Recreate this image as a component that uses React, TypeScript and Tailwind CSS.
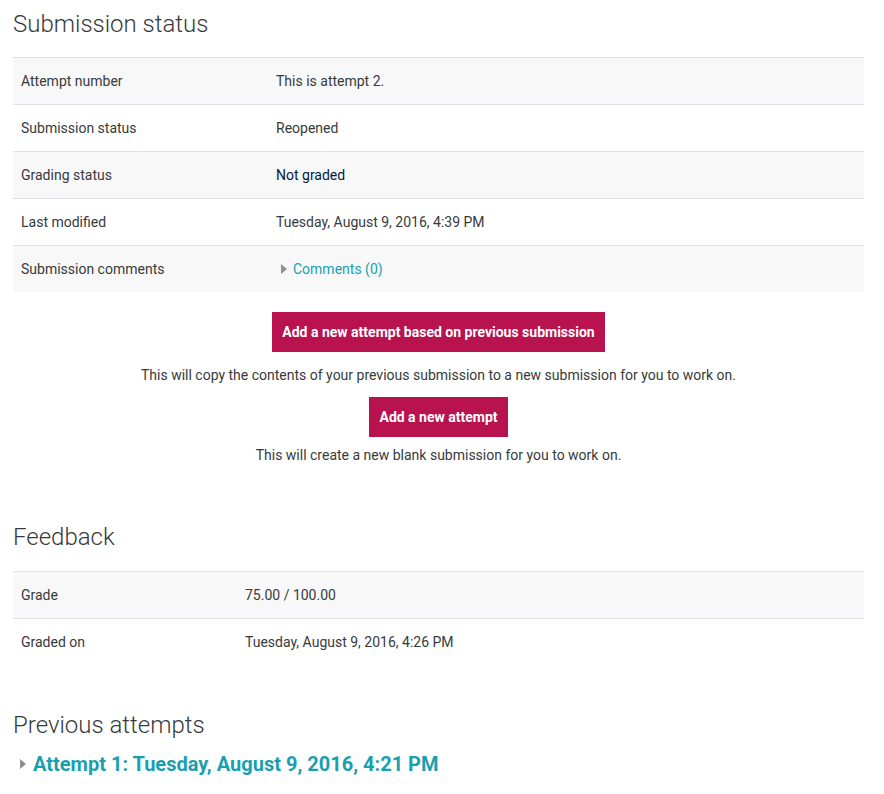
import React from 'react';

const font = { fontFamily: 'Roboto, "Noto Sans", sans-serif' };

type Row = { label: string; value: React.ReactNode };

const Caret = () => (
  <svg width="6" height="10" viewBox="0 0 6 10" className="inline-block shrink-0">
    <path d="M0 0 L6 5 L0 10 Z" fill="#8f8f8f" />
  </svg>
);

const StatusTable = ({ rows, labelWidth }: { rows: Row[]; labelWidth: string }) => (
  <div className="flex flex-col">
    {rows.map((row, i) => (
      <div
        key={row.label}
        className={`flex h-[47px] items-center border-t border-[#dee2e6] ${i % 2 === 0 ? 'bg-[#f8f8f8]' : 'bg-white'}`}
      >
        <div className={`${labelWidth} shrink-0 px-2`}>{row.label}</div>
        <div className="px-2">{row.value}</div>
      </div>
    ))}
  </div>
);

export default function App() {
  const submission: Row[] = [
    { label: 'Attempt number', value: 'This is attempt 2.' },
    { label: 'Submission status', value: 'Reopened' },
    { label: 'Grading status', value: <span className="text-[#001a3c]">Not graded</span> },
    { label: 'Last modified', value: 'Tuesday, August 9, 2016, 4:39 PM' },
    {
      label: 'Submission comments',
      value: (
        <span className="flex items-center gap-[6px] pl-[5px] text-[#1a9fb0]">
          <Caret />
          Comments (0)
        </span>
      ),
    },
  ];

  const feedback: Row[] = [
    { label: 'Grade', value: '75.00 / 100.00' },
    { label: 'Graded on', value: 'Tuesday, August 9, 2016, 4:26 PM' },
  ];

  return (
    <div className="min-h-[794px] bg-white pl-[13px] pr-[20px] pt-[8px] text-[14px] text-[#373a3c]" style={font}>
      <h2 className="text-[24px] font-light leading-[32px] text-[#373a3c]">Submission status</h2>
      <div className="mt-[17px]">
        <StatusTable rows={submission} labelWidth="w-[255px]" />
      </div>

      <div className="mt-[20px] flex flex-col items-center">
        <button className="h-[40px] bg-[#b8124f] px-[10px] text-[14px] font-bold text-white">
          Add a new attempt based on previous submission
        </button>
        <p className="mt-[12px] leading-[22px]">
          This will copy the contents of your previous submission to a new submission for you to work on.
        </p>
        <button className="mt-[11px] h-[40px] bg-[#b8124f] px-[10px] text-[14px] font-bold text-white">
          Add a new attempt
        </button>
        <p className="mt-[7px] leading-[22px]">This will create a new blank submission for you to work on.</p>
      </div>

      <h2 className="mt-[55px] text-[24px] font-light leading-[32px]">Feedback</h2>
      <div className="mt-[18px]">
        <StatusTable rows={feedback} labelWidth="w-[224px]" />
      </div>

      <h2 className="mt-[44px] text-[24px] font-light leading-[32px]">Previous attempts</h2>
      <div className="mt-[8px] flex items-center gap-[7px] pl-[7px]">
        <Caret />
        <span className="text-[20px] font-bold text-[#1a9fb0]">Attempt 1: Tuesday, August 9, 2016, 4:21 PM</span>
      </div>
    </div>
  );
}
